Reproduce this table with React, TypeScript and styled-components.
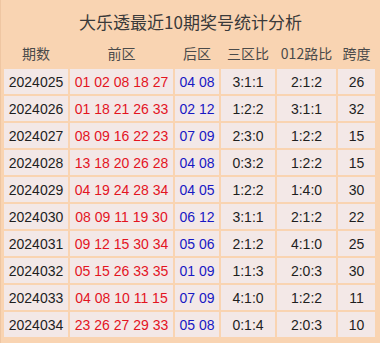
import React from "react";
import styled, { createGlobalStyle } from "styled-components";

const Global = createGlobalStyle`
  html, body { margin: 0; padding: 0; background: #f9d4b2; }
  body { font-family: "Liberation Sans", "Noto Sans CJK SC", sans-serif; }
`;

const Panel = styled.div`
  width: 380px;
  height: 343px;
  background: #f9d4b2;
  box-sizing: border-box;
  border-left: 1px solid #efc6a2;
  overflow: hidden;
`;

const Title = styled.div`
  height: 38px;
  display: flex;
  align-items: center;
  justify-content: center;
  padding-top: 4px;
  box-sizing: border-box;
  font-family: "Noto Sans CJK SC", sans-serif;
  font-size: 17px;
  color: #3a3a3a;
`;

const Grid = styled.div`
  display: grid;
  grid-template-columns: 64px 103px 44px 54px 59px 37px;
  column-gap: 2px;
  row-gap: 2px;
  padding-left: 3px;
`;

const Head = styled.div`
  height: 29px;
  display: flex;
  align-items: center;
  justify-content: center;
  font-family: "Noto Sans CJK SC", sans-serif;
  font-size: 14px;
  color: #4a4a4a;
  margin-bottom: 0px;
`;

const Cell = styled.div<{ $tone?: "red" | "blue" | "dark" }>`
  height: 25px;
  background: #f3e8e7;
  display: flex;
  align-items: center;
  justify-content: center;
  font-family: "Liberation Sans", sans-serif;
  font-size: 14px;
  color: ${(p) =>
    p.$tone === "red" ? "#e3141f" : p.$tone === "blue" ? "#1818c4" : "#1e1e1e"};
`;

const rows = [
  ["2024025", "01 02 08 18 27", "04 08", "3:1:1", "2:1:2", "26"],
  ["2024026", "01 18 21 26 33", "02 12", "1:2:2", "3:1:1", "32"],
  ["2024027", "08 09 16 22 23", "07 09", "2:3:0", "1:2:2", "15"],
  ["2024028", "13 18 20 26 28", "04 08", "0:3:2", "1:2:2", "15"],
  ["2024029", "04 19 24 28 34", "04 05", "1:2:2", "1:4:0", "30"],
  ["2024030", "08 09 11 19 30", "06 12", "3:1:1", "2:1:2", "22"],
  ["2024031", "09 12 15 30 34", "05 06", "2:1:2", "4:1:0", "25"],
  ["2024032", "05 15 26 33 35", "01 09", "1:1:3", "2:0:3", "30"],
  ["2024033", "04 08 10 11 15", "07 09", "4:1:0", "1:2:2", "11"],
  ["2024034", "23 26 27 29 33", "05 08", "0:1:4", "2:0:3", "10"],
];

const heads = ["期数", "前区", "后区", "三区比", "012路比", "跨度"];

export default function App() {
  return (
    <>
      <Global />
      <Panel>
        <Title>大乐透最近10期奖号统计分析</Title>
        <Grid>
          {heads.map((h) => (
            <Head key={h}>{h}</Head>
          ))}
          {rows.map((r) => (
            <React.Fragment key={r[0]}>
              <Cell $tone="dark">{r[0]}</Cell>
              <Cell $tone="red">{r[1]}</Cell>
              <Cell $tone="blue">{r[2]}</Cell>
              <Cell $tone="dark">{r[3]}</Cell>
              <Cell $tone="dark">{r[4]}</Cell>
              <Cell $tone="dark">{r[5]}</Cell>
            </React.Fragment>
          ))}
        </Grid>
      </Panel>
    </>
  );
}
